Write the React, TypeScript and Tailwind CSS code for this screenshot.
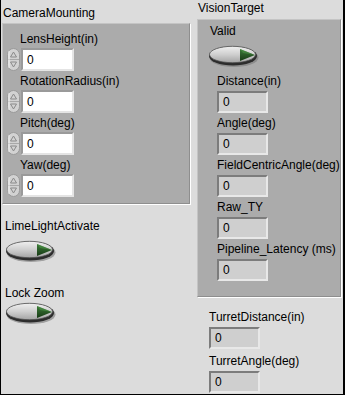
import React from "react";

const font = { fontFamily: '"Liberation Sans", Arial, sans-serif' };

function Toggle() {
  return (
    <svg width="52" height="24" viewBox="0 0 52 24">
      <defs>
        <linearGradient id="tg" x1="0" y1="0" x2="0" y2="1">
          <stop offset="0" stopColor="#f0f0f0" />
          <stop offset="0.5" stopColor="#cfcfcf" />
          <stop offset="1" stopColor="#a4a4a4" />
        </linearGradient>
        <linearGradient id="tr" x1="0" y1="0" x2="0" y2="1">
          <stop offset="0" stopColor="#3c7a38" />
          <stop offset="1" stopColor="#173a15" />
        </linearGradient>
      </defs>
      <ellipse cx="26" cy="13.5" rx="24.5" ry="9.5" fill="#7a7a7a" opacity="0.6" />
      <ellipse cx="25" cy="12" rx="24" ry="9.5" fill="#2c2c2c" />
      <ellipse cx="24.5" cy="10.5" rx="23" ry="8.2" fill="url(#tg)" stroke="#505050" strokeWidth="0.8" />
      <polygon points="32,5 47,11 32,17" fill="url(#tr)" />
      <polygon points="32,5 47,11 35,9" fill="#4f9a4a" opacity="0.5" />
    </svg>
  );
}

function Spinner() {
  return (
    <svg width="13" height="23" viewBox="0 0 13 23">
      <rect x="0.5" y="0.5" width="12" height="22" rx="6" fill="#d2d2d2" stroke="#9a9a9a" />
      <line x1="1" y1="11.5" x2="12" y2="11.5" stroke="#a8a8a8" />
      <polygon points="6.5,4 9.5,9 3.5,9" fill="none" stroke="#8a8a8a" />
      <polygon points="6.5,19 9.5,14 3.5,14" fill="none" stroke="#8a8a8a" />
      <line x1="2" y1="3" x2="2" y2="20" stroke="#f2f2f2" />
    </svg>
  );
}

function Control({ label, first }: { label: string; first?: boolean }) {
  return (
    <div className={first ? "" : "mt-[3px]"}>
      <div className="h-[15px] leading-[15px] pl-[17px] text-[12px] text-black whitespace-nowrap">{label}</div>
      <div className="mt-px flex items-center pl-[4px]">
        <Spinner />
        <div className="ml-[1px] w-[53px] h-[23px] bg-white border-2 border-t-[#9a9a9a] border-l-[#9a9a9a] border-b-[#e4e4e4] border-r-[#e4e4e4] flex items-center pl-[4px] text-[12px]">
          0
        </div>
      </div>
    </div>
  );
}

function Indicator({ label, first }: { label: string; first?: boolean }) {
  return (
    <div className={first ? "" : "mt-[3px]"}>
      <div className="h-[15px] leading-[15px] text-[12px] text-black whitespace-nowrap">{label}</div>
      <div className="mt-[2px] w-[51px] h-[22px] bg-[#cfcfcf] border-2 border-t-[#7c7c7c] border-l-[#7c7c7c] border-b-[#e8e8e8] border-r-[#e8e8e8] flex items-center pl-[4px] text-[12px]">
        0
      </div>
    </div>
  );
}

export default function App() {
  return (
    <div
      className="w-[345px] h-[395px] bg-[#dcdcdc] border-l border-b border-r-2 border-black flex"
      style={font}
    >
      {/* Left column */}
      <div className="ml-[1px] w-[188px] flex flex-col">
        <div className="mt-[6px] h-[15px] leading-[15px] pl-[1px] text-[12px]">CameraMounting</div>
        <div className="mt-[2px] w-[188px] bg-[#ababab] border border-t-[#c4c4c4] border-l-[#c4c4c4] border-b-[#8e8e8e] border-r-[#8e8e8e] shadow-[1px_1px_0_#ffffff] pt-[8px] pb-[6px]">
          <Control label="LensHeight(in)" first />
          <Control label="RotationRadius(in)" />
          <Control label="Pitch(deg)" />
          <Control label="Yaw(deg)" />
        </div>
        <div className="mt-[15px] h-[15px] leading-[15px] pl-[3px] text-[12px]">LimeLightActivate</div>
        <div className="mt-[5px] pl-[3px]">
          <Toggle />
        </div>
        <div className="mt-[23px] h-[15px] leading-[15px] pl-[3px] text-[12px]">Lock Zoom</div>
        <div className="mt-[0px] pl-[3px]">
          <Toggle />
        </div>
      </div>

      {/* Right column */}
      <div className="ml-[7px] w-[145px] flex flex-col">
        <div className="mt-[1px] h-[15px] leading-[15px] pl-[1px] text-[12px]">VisionTarget</div>
        <div className="mt-[3px] w-[144px] h-[278px] bg-[#ababab] border border-t-[#c4c4c4] border-l-[#c4c4c4] border-b-[#8e8e8e] border-r-[#8e8e8e] shadow-[1px_1px_0_#ffffff] pt-[4px]">
          <div className="h-[15px] leading-[15px] pl-[12px] text-[12px]">Valid</div>
          <div className="mt-[5px] pl-[10px]">
            <Toggle />
          </div>
          <div className="mt-[6px] pl-[19px]">
            <Indicator label="Distance(in)" first />
            <Indicator label="Angle(deg)" />
            <Indicator label="FieldCentricAngle(deg)" />
            <Indicator label="Raw_TY" />
            <Indicator label="Pipeline_Latency (ms)" />
          </div>
        </div>
        <div className="mt-[13px] pl-[12px]">
          <Indicator label="TurretDistance(in)" first />
          <div className="mt-[5px]">
            <Indicator label="TurretAngle(deg)" first />
          </div>
        </div>
      </div>
    </div>
  );
}
